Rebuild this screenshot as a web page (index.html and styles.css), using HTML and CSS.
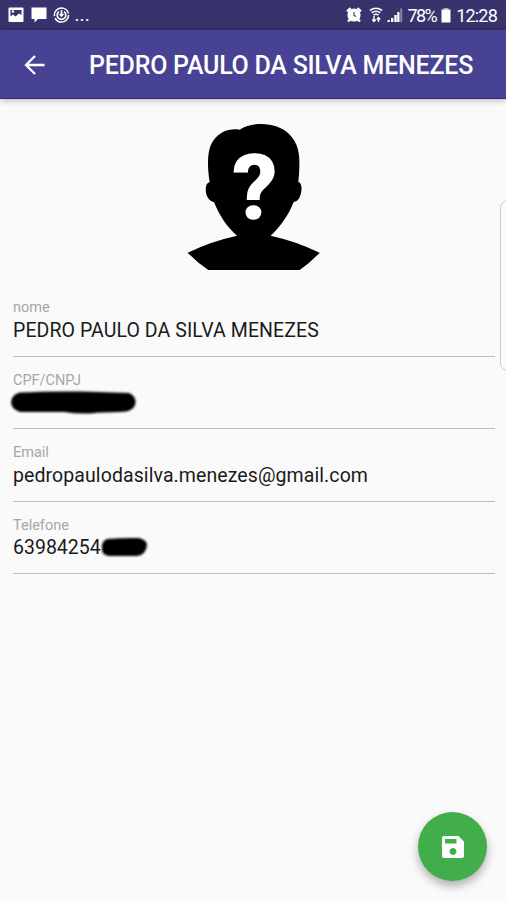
FILE: index.html
```html
<!DOCTYPE html>
<html lang="pt-BR">
<head>
  <meta charset="UTF-8">
  <meta name="viewport" content="width=device-width, initial-scale=1">
  <title>PEDRO PAULO DA SILVA MENEZES</title>
  <link rel="stylesheet" href="styles.css">
</head>
<body>
  <div class="status-bar">
    <div class="status-left">
      <svg width="16" height="16" viewBox="0 0 16 16"><path fill="#fff" fill-rule="evenodd" d="M1.500 0.500h13a1 1 0 0 1 1 1v12.500a1 1 0 0 1-1 1h-13a1 1 0 0 1-1-1v-12.500a1 1 0 0 1 1-1zM2.500 3v6.500l2.500-2 2.500 2 3.500-3 2.500 1.500v-5z"/><circle cx="5" cy="4.500" r="1.200" fill="#fff"/></svg>
      <svg width="16" height="16" viewBox="0 0 16 16"><path fill="#fff" d="M0.500 0.500h15v11.500h-8.500l-3.500 3.500v-3.500h-3z"/></svg>
      <svg width="17" height="17" viewBox="0 0 17 17" fill="none" stroke="#fff"><circle cx="8.500" cy="8" r="7.100" stroke-width="1.500" stroke-dasharray="19 2 22 1.600"/><path d="M6 4.600a4.300 4.300 0 1 0 5 0" stroke-width="1.700"/><path d="M8.500 3v5.500M6.700 7l1.800 2 1.800-2" stroke-width="1.600"/></svg>
      <span class="dots">...</span>
    </div>
    <div class="status-right">
      <svg class="alarm" width="16" height="16" viewBox="0 0 16 16"><path d="M1 4.500l3.500-3.500M15 4.500l-3.500-3.500M2 14.500l3-3M14 14.500l-3-3" stroke="#fff" stroke-width="2.400"/><circle cx="8" cy="8" r="6.600" fill="#fff"/><path d="M8 5v3.500l2.200 1" fill="none" stroke="#38336c" stroke-width="1.100"/></svg>
      <svg class="wifi" width="14" height="16" viewBox="0 0 14 16" fill="none" stroke="#fff"><path d="M1 3.500c4-3 8-3 12 0M2.800 5.800c3-2.200 5.400-2.200 8.400 0M4.500 8.100c2-1.400 3-1.400 5 0" stroke-width="1.600"/><path d="M5 9v5.500M3.300 12.500l1.700 2 1.700-2M9.500 15v-4.500M7.800 12.500l1.700-2 1.700 2" stroke-width="1.400"/></svg>
      <svg class="signal" width="16" height="16" viewBox="0 0 16 16"><path d="M0.500 13h2.300v2h-2.300zM4 11h2.300v4h-2.300zM7.300 8h2.400v7h-2.400zM10.200 5h2.300v10h-2.300z" fill="#fff"/><path d="M13.200 1.500h2v13.500h-2z" fill="#8884a8"/></svg>
      <span class="percent">78%</span>
      <svg class="battery" width="10" height="15" viewBox="0 0 10 15"><path d="M2.500 0h5v2h-5z" fill="#aaa7c2"/><path d="M0.500 1.500h9v13h-9z" fill="#fff"/></svg>
      <span class="time">12:28</span>
    </div>
  </div>

  <header class="app-bar">
    <svg class="back" width="22" height="22" viewBox="0 0 22 22" fill="none" stroke="#fff" stroke-width="2.300"><path d="M20.500 11h-18M11 2l-9 9 9 9"/></svg>
    <h1>PEDRO PAULO DA SILVA MENEZES</h1>
  </header>

  <main>
    <svg class="avatar" width="170" height="175" viewBox="0 0 510 525">
      <path d="M209 59C228 47 248 42 274 42C342 42 388 84 388 150Q389 184 385 216C396 218 397 240 391 256C388 267 381 275 371 276C356 315 331 350 302 377Q379 394 449 428Q420 459 389 480H115Q83 459 53 428Q123 394 201 377C171 351 147 315 132 276C121 274 111 264 108 248C106 231 108 220 119 216C113 182 112 144 118 119C127 80 163 51 209 59Z"/>
      <text class="question" x="254" y="323" text-anchor="middle">?</text>
    </svg>

    <form class="fields">
      <div class="field">
        <label>nome</label>
        <div class="value name">PEDRO PAULO DA SILVA MENEZES</div>
      </div>
      <div class="field">
        <label>CPF/CNPJ</label>
        <div class="value"><svg class="mark-cpf" width="130" height="26" viewBox="0 0 130 26"><path d="M12 2.500Q40 1 74 1.500L121 3Q128 6 127.500 13Q126 22 112 22Q94 22 83 23.500Q68 24 56 22L12 22Q3 19 3 12Q4 4 12 2.500Z"/></svg></div>
      </div>
      <div class="field">
        <label>Email</label>
        <div class="value email">pedropaulodasilva.menezes@gmail.com</div>
      </div>
      <div class="field">
        <label>Telefone</label>
        <div class="value phone">63984254<svg class="mark-phone" width="50" height="24" viewBox="0 0 50 24"><path d="M8 3Q24 1.500 40 2Q48 4 48 9Q47 19 38 20L10 20Q3 19 3 14Q2 5 8 3Z"/></svg></div>
      </div>
    </form>
  </main>

  <div class="edge-handle"></div>

  <button class="fab" aria-label="Salvar">
    <svg width="24" height="24" viewBox="0 0 24 24"><path fill="#fff" fill-rule="evenodd" d="M3 1h14.500l5.500 5.500v14.500a2 2 0 0 1-2 2h-18a2 2 0 0 1-2-2v-18a2 2 0 0 1 2-2zM4 4v4.500h11.500v-4.500zM12 13a3.500 3.500 0 1 0 0.010 0z"/></svg>
  </button>
</body>
</html>
```
FILE: styles.css
```css
* { box-sizing: border-box; }
body { margin: 0; height: 900px; overflow: hidden; background: #fafafa; font-family: Roboto, "Liberation Sans", sans-serif; color: #1a1a1a; }

.status-bar { height: 30px; padding: 0 9px 0 8px; display: flex; justify-content: space-between; align-items: center; background: #38336c; color: #fff; }
.status-left, .status-right { display: flex; align-items: center; }
.status-left { gap: 6.5px; }
.dots { font-size: 19px; line-height: 20px; letter-spacing: 0.1px; margin-left: -2px; }
.status-right { font-size: 18px; }
.wifi { margin-left: 7px; }
.signal { margin-left: 4px; }
.percent { margin-left: 5px; letter-spacing: -1.6px; }
.battery { margin-left: 5px; }
.time { margin-left: 5px; letter-spacing: -0.8px; }

.app-bar { height: 69px; padding-left: 24px; display: flex; align-items: center; background: #484294; border-bottom: 1px solid #302887; box-shadow: 0 1px 7px rgba(0, 0, 0, 0.3); color: #fff; }
.back { margin-top: 1px; }
h1 { margin: 2px 0 0 43px; font-size: 25px; font-weight: 500; letter-spacing: -0.25px; white-space: nowrap; }

main { padding: 11px 11px 0 13px; }
.avatar { display: block; margin-left: 157px; }
.question { font-family: Roboto, sans-serif; font-size: 268px; font-weight: 700; fill: #fff; stroke: #fff; stroke-width: 5px; }

.fields { display: flex; flex-direction: column; margin-top: -1px; }
.field { height: 72.5px; padding-top: 15px; border-bottom: 1px solid #bdbdbd; }
.field label { display: block; font-size: 14.5px; line-height: 18px; color: #a6a6a6; }
.value { height: 26px; display: flex; align-items: center; font-size: 19.5px; white-space: nowrap; }
.name, .email { letter-spacing: 0.09px; }
.mark-cpf { margin-left: -5px; filter: blur(0.8px); }
.mark-phone { margin-left: -2px; filter: blur(0.8px); }

.edge-handle { position: absolute; top: 200px; right: -12px; width: 18px; height: 171px; border: 1px solid #ccc; border-radius: 8px; background: #fcfcfc; }
.fab { position: absolute; right: 19px; bottom: 19px; width: 69px; height: 69px; padding: 0; display: flex; align-items: center; justify-content: center; border: 0; border-radius: 50%; background: #42ae4b; box-shadow: 0 5px 10px rgba(0, 0, 0, 0.3); }
```
